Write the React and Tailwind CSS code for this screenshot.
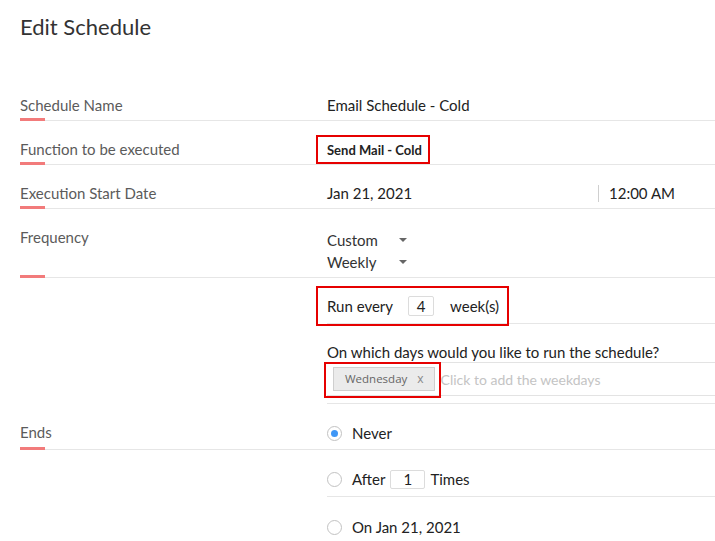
const line = 'border-b border-[#e6e6e6]';

function Label({ children }) {
  return (
    <div className="w-[307px] shrink-0 pt-[18px] leading-[20px] text-[15px] text-[#5b5b5b]">
      {children}
    </div>
  );
}

function Row({ label, children, className = '' }) {
  return (
    <div className={`relative flex ${line} ${className}`}>
      <Label>{label}</Label>
      <div className="flex-1">{children}</div>
      <span className="absolute left-0 bottom-[-1px] h-[3px] w-[25px] bg-[#f27b7b]" />
    </div>
  );
}

function Caret() {
  return <span className="h-0 w-0 border-x-[4px] border-x-transparent border-t-[4px] border-t-[#666]" />;
}

function Select({ value }) {
  return (
    <div className="flex w-[80px] items-center justify-between leading-[22px]">
      <span>{value}</span>
      <Caret />
    </div>
  );
}

function Radio({ checked }) {
  return (
    <span className="flex h-[15px] w-[15px] shrink-0 items-center justify-center rounded-full border border-[#c2c2c2] bg-white">
      {checked && <span className="h-[7px] w-[7px] rounded-full bg-[#3f97f6]" />}
    </span>
  );
}

export default function App() {
  return (
    <div className="min-h-screen bg-white pl-5 font-['Lato',sans-serif] text-[15px] text-[#222]">
      <h1 className="pt-[13px] text-[22px] leading-[28px] text-[#333]">Edit Schedule</h1>

      <div className="mt-[36px]">
        <Row label="Schedule Name">
          <div className="pt-[18px] pb-[5px] leading-[20px]">Email Schedule - Cold</div>
        </Row>

        <Row label="Function to be executed">
          <div className="pt-[14px]">
            <div className="-ml-[11px] inline-block border-2 border-[#e60000] pt-[3px] pb-[1px] pl-[9px] pr-[6px] text-[13px] font-bold leading-[21px]">
              Send Mail - Cold
            </div>
          </div>
        </Row>

        <Row label="Execution Start Date">
          <div className="flex items-center pt-[18px] pb-[5px] leading-[20px]">
            <span className="w-[271px]">Jan 21, 2021</span>
            <span className="h-[17px] border-l border-[#cfcfcf]" />
            <span className="pl-[10px]">12:00 AM</span>
          </div>
        </Row>

        <Row label="Frequency">
          <div className="pt-[20px] pb-[4px] text-[#333]">
            <Select value="Custom" />
            <Select value="Weekly" />
          </div>
        </Row>

        <div className={`ml-[307px] pt-[8px] ${line}`}>
          <div className="-mb-[3px] -ml-[11px] inline-flex h-[40px] items-center border-2 border-[#e60000] pl-[9px] pr-[8px] leading-[20px]">
            <span>Run every</span>
            <span className="ml-[15px] flex h-[20px] w-[26px] items-center justify-center rounded-[2px] border border-[#dcdcdc]">4</span>
            <span className="ml-[16px]">week(s)</span>
          </div>
        </div>

        <div className={`ml-[307px] pt-[18px] pb-[7px] ${line}`}>
          <div className="leading-[20px]">On which days would you like to run the schedule?</div>
          <div className="relative flex items-center border-y border-[#e3e3e3] py-[4px] pl-[6px]">
            <span className="flex h-[24px] items-center border border-[#cfcfcf] bg-[#ebebeb] pl-[11px] pr-[10px] font-['Open_Sans',sans-serif] text-[11.5px] text-[#666]">
              Wednesday
              <span className="ml-[10px] text-[12px] text-[#888]">x</span>
            </span>
            <span className="ml-[6px] text-[14px] text-[#c4c4c4]">Click to add the weekdays</span>
            <span className="absolute left-[-3px] top-[-1px] h-[36px] w-[117px] border-2 border-[#e60000]" />
          </div>
        </div>

        <Row label="Ends">
          <div className="flex items-center gap-[10px] pt-[19px] pb-[6px] leading-[20px]">
            <Radio checked />
            <span>Never</span>
          </div>
        </Row>

        <div className={`ml-[307px] flex items-center pt-[19px] pb-[7px] leading-[20px] ${line}`}>
          <Radio />
          <span className="ml-[10px]">After</span>
          <span className="ml-[5px] flex h-[19px] w-[35px] items-center justify-center rounded-[2px] border border-[#dcdcdc]">1</span>
          <span className="ml-[5px]">Times</span>
        </div>

        <div className="ml-[307px] flex items-center gap-[10px] pt-[20px] pb-[8px] leading-[20px]">
          <Radio />
          <span>On Jan 21, 2021</span>
        </div>
      </div>
    </div>
  );
}
